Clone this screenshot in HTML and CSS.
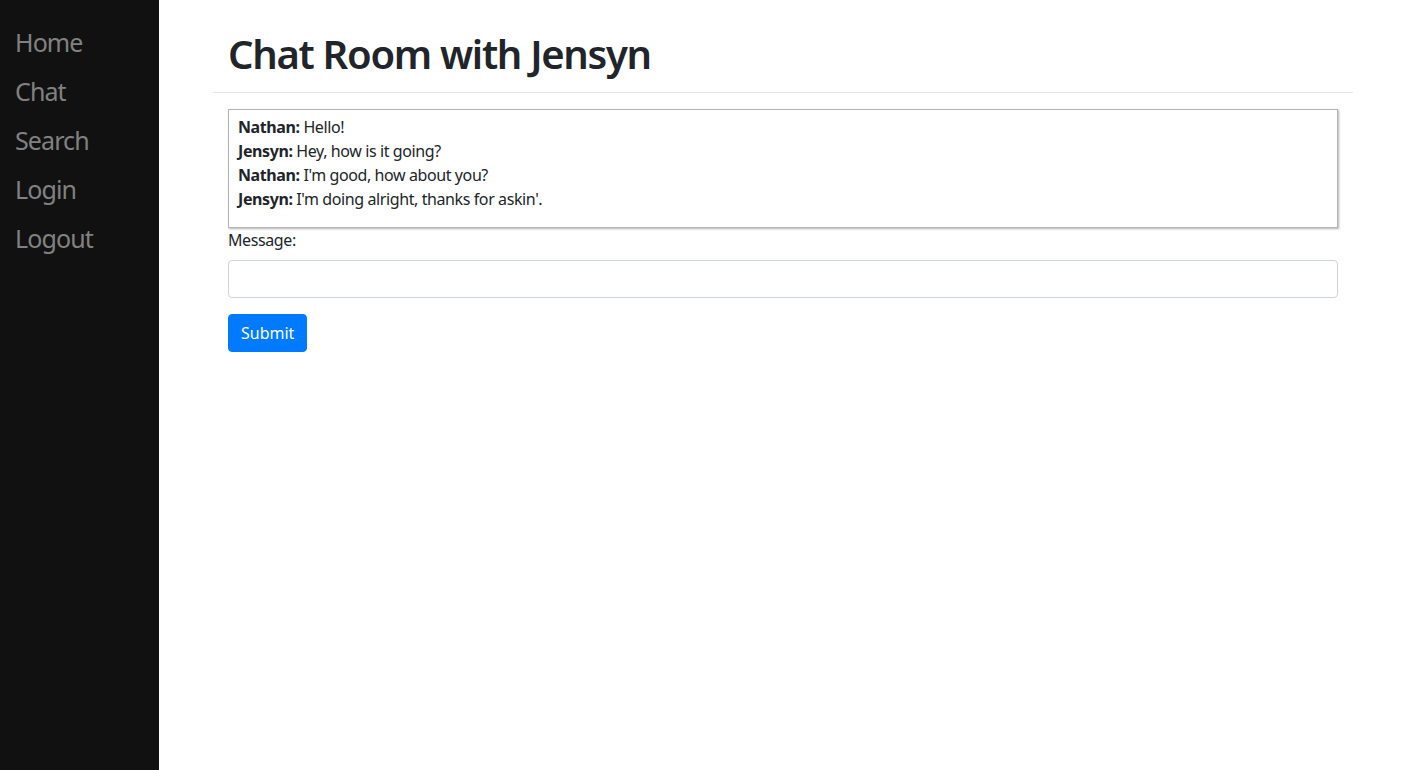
FILE: index.html
```html
<!DOCTYPE html>
<html lang="en">
<head>
<meta charset="utf-8">
<title>Chat Room with Jensyn</title>
<link rel="stylesheet" href="styles.css">
</head>
<body>
<div class="layout">
  <nav class="sidenav">
    <a href="#">Home</a>
    <a href="#">Chat</a>
    <a href="#">Search</a>
    <a href="#">Login</a>
    <a href="#">Logout</a>
  </nav>
  <main class="main">
    <div class="container">
      <h1 class="title">Chat Room with Jensyn</h1>
      <hr class="rule">
      <div class="content">
        <div class="chat-log">
          <div class="msg"><b>Nathan:</b> Hello!</div>
          <div class="msg"><b>Jensyn:</b> Hey, how is it going?</div>
          <div class="msg"><b>Nathan:</b> I'm good, how about you?</div>
          <div class="msg"><b>Jensyn:</b> I'm doing alright, thanks for askin'.</div>
        </div>
        <form class="form">
          <div class="form-group">
            <label class="label" for="message">Message:</label>
            <input class="input" id="message" type="text">
          </div>
          <button class="btn" type="button">Submit</button>
        </form>
      </div>
    </div>
  </main>
</div>
</body>
</html>
```

FILE: styles.css
```css
* { box-sizing: border-box; }
html, body { margin: 0; height: 100%; }
body {
  font-family: "Noto Sans", "Open Sans", sans-serif;
  font-size: 16px;
  line-height: 1.5;
  letter-spacing: -0.4px;
  color: #212529;
  background: #fff;
}
.layout {
  display: flex;
  min-height: 100%;
}
.sidenav {
  width: 159px;
  flex: 0 0 159px;
  background: #111;
  padding-top: 18px;
  display: flex;
  flex-direction: column;
}
.sidenav a {
  display: block;
  padding: 6px 8px 6px 15px;
  font-size: 25px;
  line-height: 37px;
  letter-spacing: -0.9px;
  color: #818181;
  text-decoration: none;
}
.main {
  flex: 1;
  min-width: 0;
}
.container {
  width: 1140px;
  margin: 0 auto;
}
.title {
  margin: 30px 0 0;
  padding: 0 15px;
  font-size: 40px;
  font-weight: 600;
  line-height: 48px;
  letter-spacing: -1.3px;
  color: #212529;
}
.rule {
  margin: 14px 0 16px;
  border: 0;
  border-top: 1px solid rgba(0,0,0,.1);
}
.content {
  padding: 0 15px;
}
.chat-log {
  height: 119px;
  padding: 5px 9px;
  border: 1px solid #b5b5b5;
  box-shadow: 1px 1px 2px rgba(0,0,0,.3);
}
.msg {
  line-height: 24px;
}
.msg b { font-weight: 700; }
.form { margin: 0; }
.form-group { margin-bottom: 16px; }
.label {
  display: inline-block;
  margin-bottom: 8px;
}
.input {
  display: block;
  width: 100%;
  height: 38px;
  padding: 6px 12px;
  font: inherit;
  color: #495057;
  border: 1px solid #ced4da;
  border-radius: 4px;
  background: #fff;
}
.btn {
  font: inherit;
  line-height: 24px;
  padding: 6px 12px;
  color: #fff;
  background: #007bff;
  border: 1px solid #007bff;
  border-radius: 4px;
}
```
